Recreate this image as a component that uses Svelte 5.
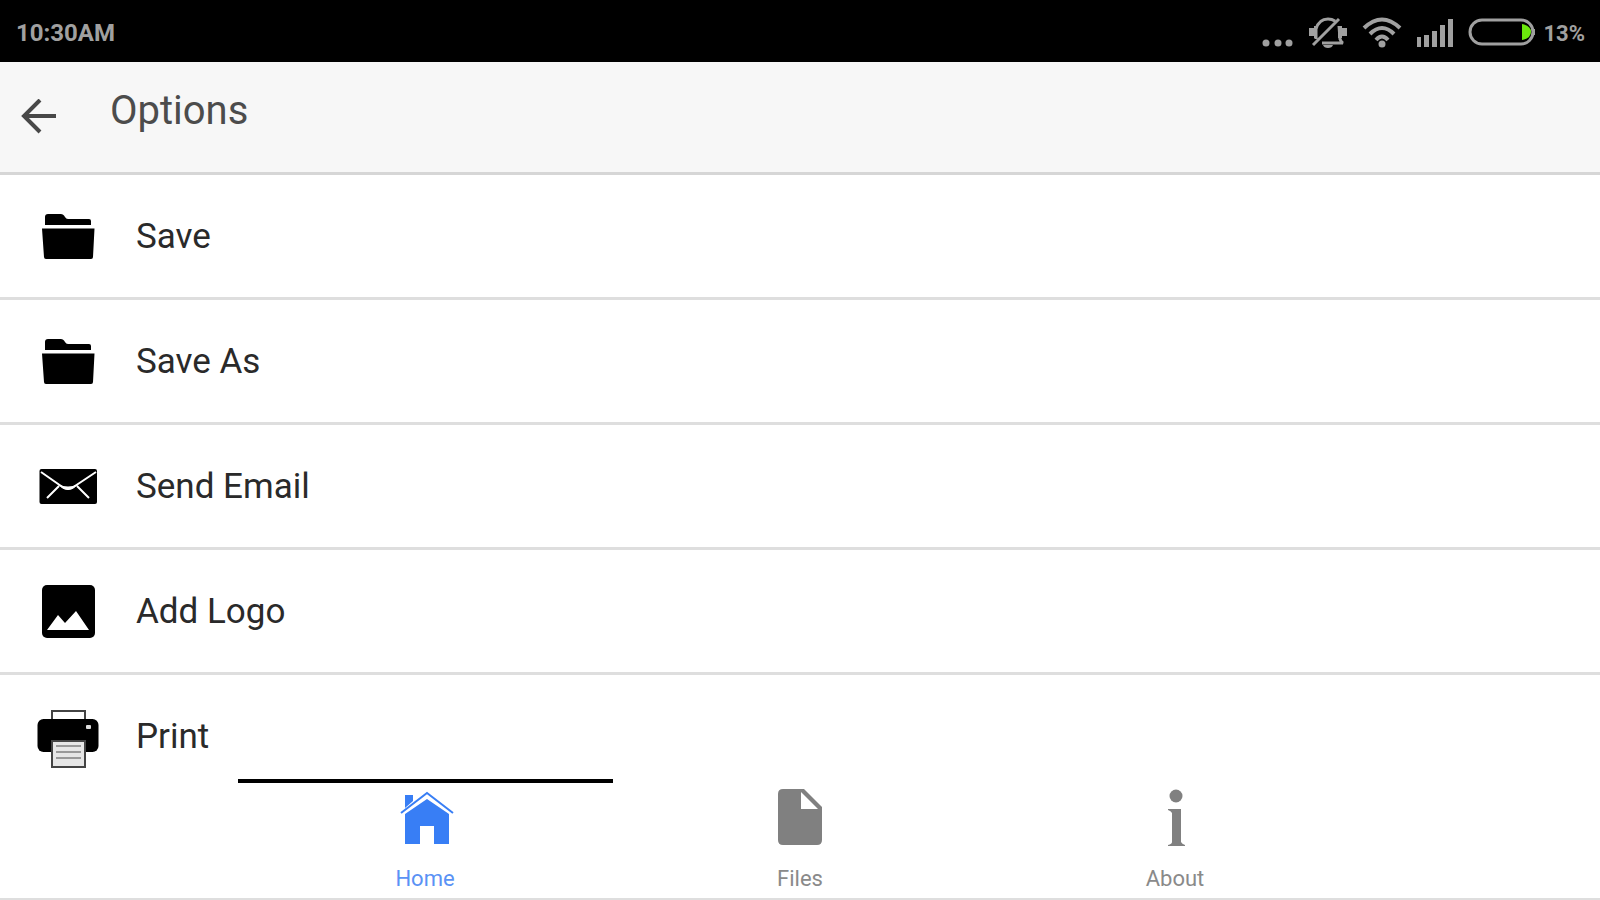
<script lang="ts">
type IconName = 'folder' | 'mail' | 'image' | 'print'
type TabId = 'home' | 'files' | 'about'

interface Option {
  label: string
  icon: IconName
}

interface Tab {
  id: TabId
  label: string
}

const options: Option[] = [
  { label: 'Save', icon: 'folder' },
  { label: 'Save As', icon: 'folder' },
  { label: 'Send Email', icon: 'mail' },
  { label: 'Add Logo', icon: 'image' },
  { label: 'Print', icon: 'print' },
]

const tabs: Tab[] = [
  { id: 'home', label: 'Home' },
  { id: 'files', label: 'Files' },
  { id: 'about', label: 'About' },
]

let activeTab = $state<TabId>('home')
</script>

{#snippet optionIcon(name: IconName)}
  <svg class="option-icon" viewBox="0 0 64 64" aria-hidden="true">
    {#if name === 'folder'}
      <path d="M9 21V13q0-3 3-3H25q2 0 3 1.500l1 1.500q1 2 3 2H53q2 0 2 2V21Z" />
      <path d="M6 24.500H58.500L57 53q0 2-2 2H10q-2 0-2-2Z" />
    {:else if name === 'mail'}
      <rect x="3.500" y="15" width="57.500" height="35" rx="2" />
      <path class="cut" d="M5 18L25 32Q32 38 39 32L60 18M23 32L11 44M41 32L53 44" />
      <path fill="#fff" d="M22 30Q32 35 42 30L38 34Q32 38 26 34Z" />
    {:else if name === 'image'}
      <rect x="6" y="6" width="53" height="53" rx="5" />
      <path fill="#fff" d="M11 51L22 36L29 44L40 32L53 51Z" />
    {:else}
      <rect class="sheet" x="16" y="7" width="33" height="14" />
      <rect x="1.500" y="15" width="61" height="33" rx="6" />
      <rect fill="#ddd" x="50" y="21" width="5" height="4" rx="1" />
      <rect class="sheet paper" x="16" y="37" width="33" height="26" />
      <path class="lines" d="M20 42H45M20 48H45M20 54H45" />
    {/if}
  </svg>
{/snippet}

{#snippet tabIcon(id: TabId)}
  <svg class="tab-icon" viewBox="0 0 60 60" aria-hidden="true">
    {#if id === 'home'}
      <path d="M10 7H18V13L10 20Z" />
      <path d="M32 11L54 26V56H39V38H25V56H10V26Z" />
      <path class="roof" d="M6 25L32 5L58 25" />
    {:else if id === 'files'}
      <path
        fill-rule="evenodd"
        d="M12 1H34L52 19V52q0 5-5 5H13q-5 0-5-5V6q0-5 5-5ZM31 4V21H48Z"
      />
    {:else}
      <circle cx="31" cy="8" r="6.500" />
      <path d="M23 21H36V54Q37 56 40 57V58H23V57Q27 56 27 54V25Q26 23 23 22Z" />
    {/if}
  </svg>
{/snippet}

<div class="screen">
  <div class="status-bar">
    <span class="clock">10:30AM</span>
    <div class="indicators">
      <svg width="32" height="32" viewBox="0 0 32 32" aria-hidden="true">
        <circle cx="4" cy="26" r="3.500" />
        <circle cx="16" cy="26" r="3.500" />
        <circle cx="27" cy="26" r="3.500" />
      </svg>
      <!-- muted bell -->
      <svg width="40" height="32" viewBox="0 0 40 32" aria-hidden="true">
        <path class="stroke" d="M8 22V12Q11 2 20 2Q24 2 27 4M31 9L32 22Q33 25 35 26H14M5 28L31 2" />
        <path d="M1 11H6V9H9V21H6V19H1ZM39 11H34V9H30V21H34V19H39ZM15 28H25Q24 31 20 31Q16 31 15 28Z" />
      </svg>
      <svg width="40" height="32" viewBox="0 0 40 32" aria-hidden="true">
        <path class="stroke wifi" d="M2 11Q20-6 38 11M8 17Q20 5 32 17M14 23Q20 16 26 23" />
        <circle cx="20" cy="27" r="3.500" />
      </svg>
      <svg width="38" height="32" viewBox="0 0 38 32" aria-hidden="true">
        <path d="M1 20H5V30H1ZM8 18H13V30H8ZM16 14H21V30H16ZM24 8H29V30H24ZM32 2H37V30H32Z" />
      </svg>
      <div class="battery">
        <svg width="68" height="32" viewBox="0 0 68 32" aria-hidden="true">
          <rect class="stroke" x="2" y="3" width="63" height="24" rx="12" />
          <path class="charge" d="M54 7Q63 9 63 15Q63 21 54 23Z" />
          <rect x="65" y="12" width="2" height="6" />
        </svg>
        <span class="percent">13%</span>
      </div>
    </div>
  </div>

  <header>
    <button class="back" aria-label="Back">
      <svg viewBox="0 0 36 36" aria-hidden="true">
        <path d="M36 17H4M20 1L4 17L20 33" />
      </svg>
    </button>
    <h1>Options</h1>
  </header>

  <main>
    <ul>
      {#each options as option (option.label)}
        <li>
          <button class="option">
            {@render optionIcon(option.icon)}
            <span>{option.label}</span>
          </button>
        </li>
      {/each}
    </ul>
  </main>

  <nav>
    {#each tabs as tab (tab.id)}
      <a
        href="#{tab.id}"
        class:active={tab.id === activeTab}
        aria-current={tab.id === activeTab ? 'page' : undefined}
        onclick={() => (activeTab = tab.id)}
      >
        {@render tabIcon(tab.id)}
        <span>{tab.label}</span>
      </a>
    {/each}
  </nav>
</div>

<style>
  .screen {
    display: flex;
    flex-direction: column;
    height: 100vh;
    background: #fff;
    color: #2a2a2a;
    font-family: Roboto, 'Liberation Sans', sans-serif;
  }

  button {
    border: none;
    background: transparent;
    color: inherit;
    font: inherit;
    cursor: pointer;
  }

  .status-bar {
    display: flex;
    flex: none;
    align-items: center;
    justify-content: space-between;
    box-sizing: border-box;
    height: 62px;
    padding: 4px 15px 0 16px;
    background: #000;
    color: #a0a0a0;
    font-weight: 700;
  }

  .clock {
    font-size: 24px;
  }

  .percent {
    font-size: 22px;
  }

  .indicators {
    display: flex;
    align-items: center;
    gap: 14px;
  }

  .battery {
    display: flex;
    align-items: center;
    gap: 7px;
  }

  .indicators svg {
    fill: #a0a0a0;
  }

  .indicators .stroke {
    fill: none;
    stroke: #a0a0a0;
    stroke-width: 3;
  }

  .indicators .wifi {
    stroke-width: 4;
  }

  .indicators .charge {
    fill: #6be80c;
  }

  header {
    display: flex;
    flex: none;
    align-items: center;
    gap: 54px;
    box-sizing: border-box;
    height: 113px;
    padding: 0 20px;
    border-bottom: 3px solid #d6d6d6;
    background: #f7f7f7;
    color: #4c4c4c;
  }

  .back {
    display: flex;
    padding: 0;
  }

  .back svg {
    width: 36px;
    height: 36px;
    fill: none;
    stroke: #484848;
    stroke-width: 4;
  }

  h1 {
    margin: 0;
    padding-bottom: 14px;
    font-size: 40px;
    font-weight: 400;
  }

  main {
    flex: 1;
    min-height: 0;
    overflow: hidden;
  }

  ul {
    list-style: none;
    margin: 0;
    padding: 0;
  }

  li {
    border-bottom: 3px solid #dedede;
  }

  .option {
    display: flex;
    align-items: center;
    gap: 36px;
    width: 100%;
    height: 122px;
    padding: 0 36px;
    font-size: 35px;
    text-align: left;
  }

  .option-icon {
    width: 64px;
    height: 64px;
    fill: #000;
  }

  .cut {
    fill: none;
    stroke: #fff;
    stroke-width: 2;
  }

  .sheet {
    fill: #fff;
    stroke: #444;
    stroke-width: 2;
  }

  .paper {
    fill: #e6e6e6;
  }

  .lines {
    stroke: #999;
    stroke-width: 2;
  }

  nav {
    display: flex;
    flex: none;
    justify-content: center;
    border-bottom: 2px solid #dedede;
    background: #fff;
  }

  nav a {
    display: flex;
    flex: 0 1 375px;
    flex-direction: column;
    align-items: center;
    gap: 17px;
    padding: 5px 0;
    border-top: 4px solid transparent;
    color: #808080;
    font-size: 22px;
    line-height: 28px;
    text-decoration: none;
  }

  nav a span {
    color: #8a8a8a;
  }

  nav a.active {
    border-top-color: #000;
    color: #387ef5;
  }

  nav a.active span {
    color: #5a92f5;
  }

  .tab-icon {
    width: 60px;
    height: 60px;
    fill: currentColor;
  }

  .roof {
    fill: none;
    stroke: currentColor;
    stroke-width: 2;
  }
</style>
